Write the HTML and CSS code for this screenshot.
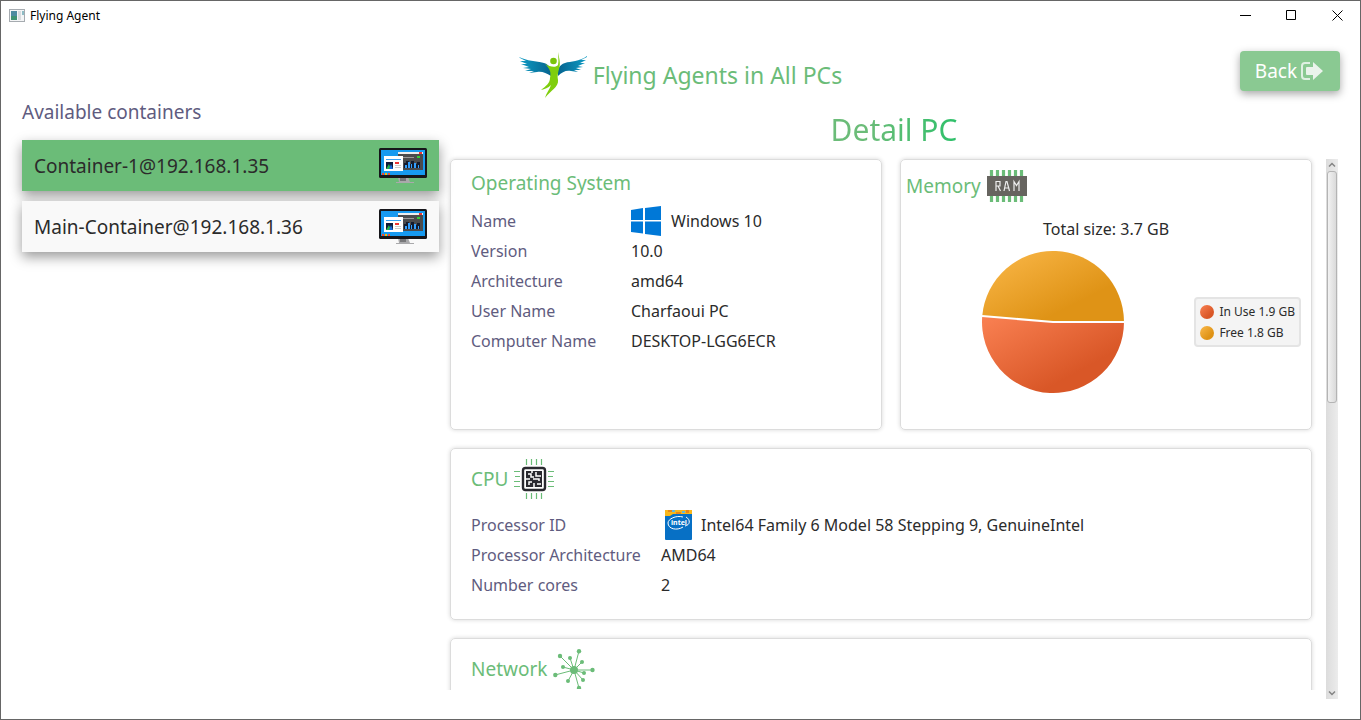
FILE: index.html
```html
<!DOCTYPE html>
<html lang="en">
<head>
<meta charset="utf-8">
<title>Flying Agent</title>
<link rel="stylesheet" href="styles.css">
</head>
<body>
<svg class="defs" width="0" height="0" aria-hidden="true">
  <defs>
    <linearGradient id="wing" x1="0" x2="1"><stop offset="0" stop-color="#0e9cc4"/><stop offset="1" stop-color="#06638f"/></linearGradient>
    <linearGradient id="wing-right" x1="1" x2="0"><stop offset="0" stop-color="#0e9cc4"/><stop offset="1" stop-color="#06638f"/></linearGradient>
    <linearGradient id="orange" x1="0" y1="0" x2="1" y2="1"><stop offset="0" stop-color="#fbb94b"/><stop offset=".7" stop-color="#df9316"/></linearGradient>
    <linearGradient id="red" x1="0" y1="0" x2="1" y2="1"><stop offset="0" stop-color="#fa8153"/><stop offset=".7" stop-color="#d95727"/></linearGradient>
    <symbol id="monitor" viewBox="0 0 48 36">
      <path d="M19 29h10l2 5h4v1H17v-1h3z" fill="#a9a9ab"/><path d="M21 30h6v3h-6z" fill="#77787a"/>
      <rect width="48" height="30" rx="1.5" fill="#16161a"/>
      <rect x="2" y="2" width="44" height="25" fill="#179af0"/>
      <rect x="19" y="5" width="25" height="17" fill="#4b4b4d"/><rect x="19" y="4" width="25" height="2" fill="#eee"/>
      <path d="M40 4h3v2h-3z" fill="#e33"/><path d="M38 8h3v2h-3z" fill="#3c3"/><path d="M24 9h11v1H24z" fill="#999"/>
      <path d="M25 20v-5h2v-2h3v3h2v-3h3v3h3v-2h3v6z" fill="#141c2e"/>
      <path d="M26 17h2v3h-2zM29 14h2v6h-2zM32 16h1v4h-1zM35 15h2v5h-2zM39 17h1v3h-1z" fill="#33a0ff"/>
      <rect x="5" y="8" width="19" height="15" fill="#fff"/><path d="M7 11h15v1H7z" fill="#39a2f5"/>
      <rect x="7" y="14" width="7" height="7" fill="#111a39"/><path d="m7 21 3-5 2 5z" fill="#25b44a"/><path d="m10 21 2-5 2 5z" fill="#166ee0"/>
      <path d="M16 14h4v2h-4z" fill="#e33"/><path d="M16 17h6v1h-6zM16 19h6v1h-6z" fill="#ccc"/>
      <path d="M3 25h2v2H3zM9 25h2v2H9z" fill="#f04b36"/><path d="M6 25h2v2H6z" fill="#fb0"/>
    </symbol>
  </defs>
</svg>
<div class="window">
  <header class="titlebar">
    <svg class="app-icon" viewBox="0 0 16 13" aria-hidden="true"><rect x=".5" y=".5" width="15" height="12" fill="#f4f5f6" stroke="#a6abb0"/><path d="M2 2h6v9H2z" fill="#4d8ba0"/><path d="M2 7h6v4H2z" fill="#3f9272"/><path d="M9 2h3v9H9z" fill="#d9dcdf"/><path d="M13 2h2v4h-2z" fill="#8ebcc5"/></svg>
    <span class="app-name">Flying Agent</span>
    <button class="win-btn" aria-label="Minimize"><svg viewBox="0 0 11 11"><path d="M0 5.500h11"/></svg></button>
    <button class="win-btn" aria-label="Maximize"><svg viewBox="0 0 11 11"><path d="M.5.5h9v9h-9z"/></svg></button>
    <button class="win-btn" aria-label="Close"><svg viewBox="0 0 11 11"><path d="m.5.5 10 10m0-10-10 10"/></svg></button>
  </header>
  <div class="banner">
    <div class="brand">
      <svg class="logo" viewBox="0 0 68 46" aria-hidden="true">
        <path d="M0 5c8 4 17 4 25 6 6 2 8 6 7 13-5-3-9-5-14-4l-8 1 5-2-9 0 6-2-8-1 6-1-8-3 6 0-7-3 6 0-6-3z" fill="url(#wing)"/>
        <path d="M68 4c-8 6-16 5-22 7-6 2-8 6-7 13 4-4 8-6 13-5l7 1-4-2 7 0-5-2 7-1-5-1 7-3-5 0 6-3-5 0 6-3z" fill="url(#wing-right)"/>
        <circle cx="34.500" cy="9" r="3.300" fill="#7ac40c"/>
        <path d="M39 0c1 6 3 11 1 17-1 4-2 7-1 11 1 7-8 11-13 18 1-5 5-9 6-13-3 3-6 4-10 5 5-4 9-7 9-12 1-5 1-8-5-14 5 3 11 4 13 1 1-4 0-9 0-13z" fill="#7fce0d"/>
      </svg>
      <h1 class="brand-title">Flying Agents in All PCs</h1>
    </div>
    <button class="back"><span>Back</span><svg viewBox="0 0 22 18" aria-hidden="true"><path d="M9 1H4Q1 1 1 4v10q0 3 3 3h5" fill="none" stroke="#dff0e2" stroke-width="2"/><path d="M5 6q0-1 1-1h6V0l10 9-10 9v-5H6q-1 0-1-1z" fill="#eaf3eb"/></svg></button>
  </div>
  <main class="content">
    <nav class="sidebar" aria-labelledby="containers-label">
      <h2 class="sidebar-label" id="containers-label">Available containers</h2>
      <button class="container-item selected"><span>Container-1@192.168.1.35</span><svg><use href="#monitor"/></svg></button>
      <button class="container-item"><span>Main-Container@192.168.1.36</span><svg><use href="#monitor"/></svg></button>
    </nav>
    <section class="detail">
      <h2 class="detail-title">Detail PC</h2>
      <div class="scroll-area">
        <div class="cards">
          <article class="card">
            <h3 class="card-title os-title">Operating System</h3>
            <dl class="facts">
              <dt>Name</dt><dd><svg class="value-icon" viewBox="0 0 30 30" aria-hidden="true"><path d="M0 4l12-2v12H0zM14 2l16-2v14H14zM0 15.500h12v12L0 26zM14 15.500h16V30l-16-2z" fill="#0078d7"/></svg>Windows 10</dd>
              <dt>Version</dt><dd>10.0</dd>
              <dt>Architecture</dt><dd>amd64</dd>
              <dt>User Name</dt><dd>Charfaoui PC</dd>
              <dt>Computer Name</dt><dd>DESKTOP-LGG6ECR</dd>
            </dl>
          </article>
          <article class="card memory">
            <h3 class="card-title memory-title">Memory
              <svg class="ram" viewBox="0 0 40 32" aria-hidden="true"><path d="M4.500 0v32m6-32v32m6-32v32m6-32v32m6-32v32m6-32v32" stroke="#6bbc78" stroke-width="3.200"/><path d="M0 6h40v20H0z" fill="#66645f"/><path d="M9 21V11.500h4v4.500H9m2 0 2.500 5M17 21l2-9.500h1L22.500 21M18 18h4M27 21v-9.500l2.500 4 2.500-4V21" fill="none" stroke="#eee" stroke-width="1.200"/></svg>
            </h3>
            <p class="total">Total size: 3.7 GB</p>
            <div class="chart">
              <svg class="pie" viewBox="0 0 142 142" role="img" aria-label="In use 1.9 GB, free 1.8 GB"><path d="M71 71h71A71 71 0 0 0 .254 65z" fill="url(#orange)"/><path d="M71 71h71A71 71 0 1 1 .254 65z" fill="url(#red)"/><path d="M0 65 71 71h71" fill="none" stroke="#fff" stroke-width="2"/></svg>
              <ul class="legend">
                <li><i class="dot used"></i>In Use 1.9 GB</li>
                <li><i class="dot free"></i>Free 1.8 GB</li>
              </ul>
            </div>
          </article>
          <article class="card wide">
            <h3 class="card-title">CPU
              <svg class="title-icon" viewBox="0 0 40 40" aria-hidden="true"><path d="M12.500 0v6m5-6v6m5-6v6m5-6v6m-15 28v6m5-6v6m5-6v6m5-6v6M0 12.500h6m-5 5h5m-6 5h6m-6 5h6m28-15h6m-6 5h5m-5 5h6m-6 5h6" stroke="#6bbc78" stroke-width="1.200"/><rect x="9" y="9" width="22" height="22" rx="2.500" fill="#fff" stroke="#29292f" stroke-width="2.400"/><path d="M12 12h16v16H12z" fill="#29292f"/><path d="M14 15h3v3h3M22 13v4h5M12 20h4m3 0h6v2M15 26v-3h3M20 28v-4M23 25h4M18 12v2" fill="none" stroke="#fff" stroke-width="1.500"/></svg>
            </h3>
            <dl class="facts cpu-facts">
              <dt>Processor ID</dt><dd><svg class="value-icon intel" viewBox="0 0 36 30" aria-hidden="true"><rect x="4" width="27" height="30" rx="1" fill="#0770c5"/><path d="M4 0h27v4H12l-3 2H4z" fill="#f8b71c"/><path d="M7 0h4v2H7zM15 2h5v2h-5zM25 0h3v3h-3z" fill="#e8861b"/><path d="M11 0h3v2h-3zM21 1h3v2h-3z" fill="#66b8d6"/><path d="M22 7c-7-2-15 2-15 6 0 6 9 8 15 4M25 7c5 3 4 8-1 9" fill="none" stroke="#fff"/><text x="10" y="15" font-size="7" font-weight="bold" fill="#fff" font-family="Noto Sans, sans-serif">intel</text></svg>Intel64 Family 6 Model 58 Stepping 9, GenuineIntel</dd>
              <dt>Processor Architecture</dt><dd>AMD64</dd>
              <dt>Number cores</dt><dd>2</dd>
            </dl>
          </article>
          <article class="card wide">
            <h3 class="card-title">Network
              <svg class="title-icon network-icon" viewBox="0 0 42 40" aria-hidden="true"><g fill="#6bbc78" stroke="#6bbc78"><path d="M21 21 7 7m14 14L17 9m4 12 5-19m-5 19 8-8m-8 8-11-3m11 3L2 26m19-5-6 11m6-11 5 18m-5-18 9 10m-9-10 10 3m-10-3h19" fill="none"/><g stroke="none"><circle cx="21" cy="21" r="4"/><circle cx="7" cy="7" r="2.200"/><circle cx="17" cy="9" r="2"/><circle cx="26" cy="2.300" r="2.200"/><circle cx="29" cy="13" r="2"/><circle cx="10" cy="18" r="2"/><circle cx="2.300" cy="26" r="2.200"/><circle cx="15" cy="32" r="2"/><circle cx="26" cy="39" r="2.200"/><circle cx="30" cy="31" r="2"/><circle cx="31" cy="24" r="2"/><circle cx="39.500" cy="21" r="2.200"/></g></g></svg>
            </h3>
            <dl class="facts"></dl>
          </article>
        </div>
        <div class="scrollbar" aria-hidden="true">
          <svg viewBox="0 0 12 12"><path d="m3 7.500 3-3 3 3"/></svg>
          <div class="track"><div class="thumb"></div></div>
          <svg viewBox="0 0 12 12"><path d="m3 4.500 3 3 3-3"/></svg>
        </div>
      </div>
    </section>
  </main>
</div>
</body>
</html>
```
FILE: styles.css
```css
* { box-sizing: border-box; }
body { margin: 0; font-family: "Noto Sans", sans-serif; font-size: 16px; color: #2b2b2b; background: #fff; }
h1, h2, h3, p, dl, dd, ul { margin: 0; padding: 0; font-weight: 400; }
button { font: inherit; color: inherit; border: 0; padding: 0; background: none; }
svg { display: block; flex: none; }
.defs { position: absolute; }
.window { height: 100vh; display: flex; flex-direction: column; border: 1px solid #666; background: #fff; overflow: hidden; }

.titlebar { flex: none; height: 29px; display: flex; align-items: center; padding-left: 8px; color: #000; font-size: 12px; }
.app-icon { width: 16px; height: 13px; }
.app-name { margin: 0 auto 0 5px; }
.win-btn { width: 46px; height: 29px; display: grid; place-items: center; }
.win-btn svg { width: 11px; height: 11px; fill: none; stroke: #000; }

.banner { flex: none; display: grid; grid-template-columns: 1fr auto 1fr; align-items: start; padding: 21px 20px 0; }
.brand { grid-column: 2; display: flex; align-items: center; gap: 6px; padding-top: 1px; }
.logo { width: 68px; height: 46px; }
.brand-title { font-size: 23px; line-height: 46px; color: #6bbc78; }
.back { justify-self: end; width: 100px; height: 40px; display: flex; align-items: center; justify-content: center; gap: 4px; padding-right: 2px; border-radius: 4px; background: #8ac992; color: #fff; font-size: 19px; box-shadow: 0 3px 8px rgba(0, 0, 0, .35); }
.back svg { width: 22px; height: 18px; }

.content { flex: 1; min-height: 0; display: grid; grid-template-columns: 417fr 888fr; gap: 11px; padding: 0 22px 20px 21px; }
.sidebar { display: flex; flex-direction: column; gap: 10px; }
.sidebar-label { height: 32px; font-size: 19px; line-height: 28px; color: #5f5c80; }
.container-item { height: 51px; display: flex; align-items: center; justify-content: space-between; padding: 0 12px; background: #f9f9f9; font-size: 19px; box-shadow: 0 5px 12px rgba(0, 0, 0, .4); }
.container-item.selected { background: #6bbc78; }
.container-item svg { width: 48px; height: 36px; }

.detail { min-width: 0; min-height: 0; display: flex; flex-direction: column; }
.detail-title { flex: none; padding: 10px 0 7px; font-size: 30px; line-height: 44px; text-align: center; color: transparent; background: linear-gradient(90deg, #6bbc78 47%, #2fc06a 57%); background-clip: text; -webkit-background-clip: text; }
.scroll-area { flex: 1; min-height: 0; display: flex; justify-content: space-between; gap: 10px; }
.cards { flex: 1; min-height: 0; display: grid; grid-template-columns: 432fr 412fr; grid-auto-rows: max-content; gap: 18px; overflow: hidden; padding: 4px; margin: -4px 0 9px -4px; }
.card { min-width: 0; border: 1px solid #dcdcdc; border-radius: 5px; padding: 10px 10px 19px 20px; box-shadow: 0 0 4px rgba(0, 0, 0, .16); }
.wide { grid-column: span 2; }
.card-title { display: flex; align-items: center; gap: 6px; margin-bottom: 11px; font-size: 19px; line-height: 32px; color: #6bbc78; }
.os-title { margin-bottom: 10px; line-height: 26px; }
.title-icon { width: 40px; height: 40px; }
.network-icon { width: 42px; }
.facts { display: grid; grid-template-columns: 160px 1fr; grid-auto-rows: 30px; line-height: 30px; }
.cpu-facts { grid-template-columns: 190px 1fr; }
.facts dt { color: #5f5c80; }
.facts dd { display: flex; gap: 10px; white-space: nowrap; }
.value-icon { width: 30px; height: 30px; }
.value-icon.intel { width: 36px; margin-right: -6px; }

.memory { padding: 10px 10px 36px; }
.memory-title { margin: 0 0 15px -5px; }
.ram { width: 40px; height: 32px; }
.total { line-height: 24px; text-align: center; margin-bottom: 10px; }
.chart { display: grid; grid-template-columns: 1fr auto; align-items: center; }
.pie { width: 142px; height: 142px; justify-self: center; }
.legend { list-style: none; border: 2px solid #e4e4e4; border-radius: 4px; background: #f4f4f4; padding: 2px 4px; font-size: 12px; line-height: 21px; }
.legend li { display: flex; align-items: center; gap: 5px; }
.dot { width: 14px; height: 14px; border-radius: 50%; }
.used { background: linear-gradient(135deg, #fa8153, #d95727 70%); }
.free { background: linear-gradient(135deg, #fbb94b, #df9316 70%); }

.scrollbar { flex: none; width: 12px; display: flex; flex-direction: column; background: linear-gradient(90deg, #dcdcdc, #ececec); }
.scrollbar svg { width: 12px; height: 12px; fill: none; stroke: #858585; stroke-width: 1.5; }
.track { flex: 1; padding: 0 1px; }
.thumb { height: 45%; border: 1px solid #b4b4b4; border-radius: 3px; background: linear-gradient(90deg, #f2f2f2, #dadada); }
```
